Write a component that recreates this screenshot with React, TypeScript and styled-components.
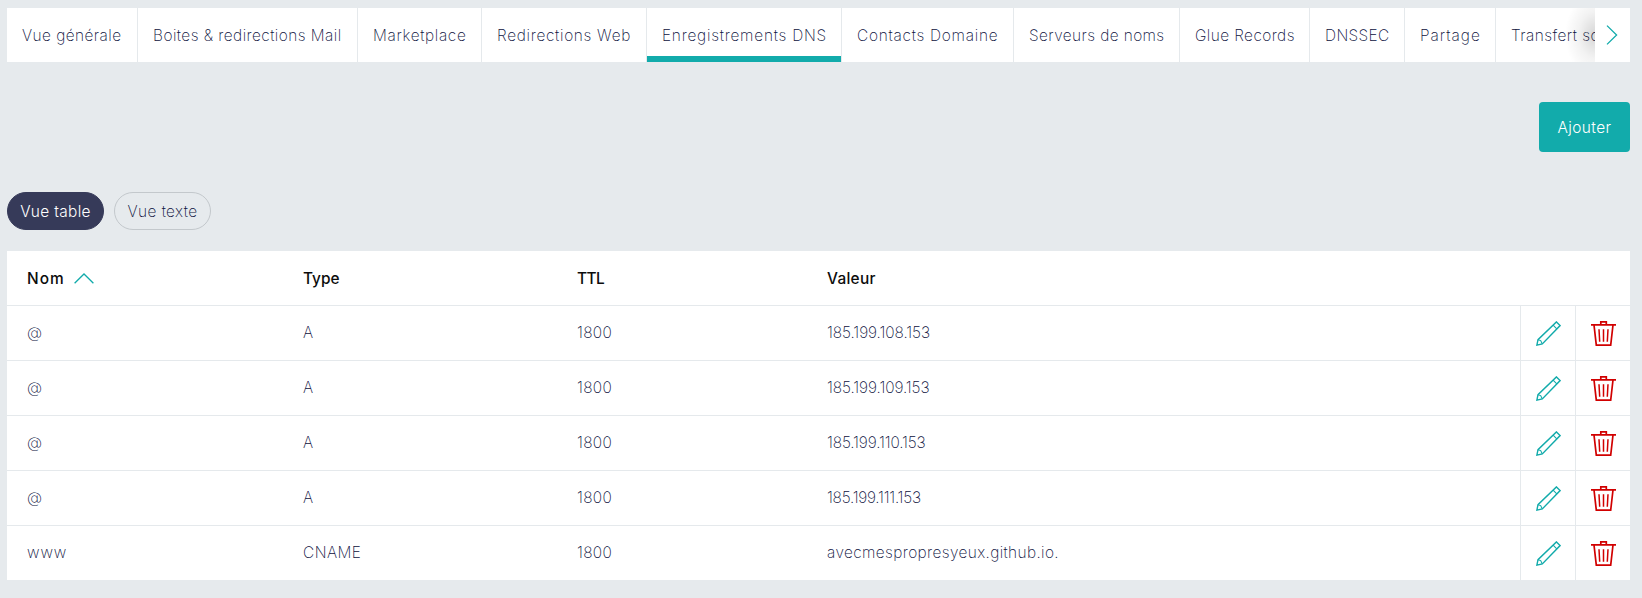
import React from "react";
import styled, { createGlobalStyle } from "styled-components";

const teal = "#12abab";
const ink = "#0b0f3c";
const line = "#e5e9ec";

const GlobalStyle = createGlobalStyle`
  * { box-sizing: border-box; }
  body {
    margin: 0;
    background: #e6eaed;
    color: ${ink};
    font-family: Inter, "Open Sans", sans-serif;
    font-size: 15.4px;
    font-weight: 200;
    line-height: 20px;
  }
`;

const Page = styled.main`
  height: 598px;
  padding: 8px 12px 0 7px;
  overflow: hidden;
`;

const TabBar = styled.nav`
  display: flex;
  height: 54px;
  background: #fff;
`;

const TabList = styled.div`
  position: relative;
  display: flex;
  flex: 1;
  min-width: 0;
  overflow: hidden;

  &::after {
    content: "";
    position: absolute;
    inset: 0 0 0 auto;
    width: 30px;
    background: radial-gradient(ellipse 30px 42px at 100% 50%, rgba(0, 0, 0, 0.16), rgba(0, 0, 0, 0.05) 55%, transparent);
  }
`;

const Tab = styled.a<{ $width: number; $active?: boolean }>`
  display: flex;
  align-items: center;
  flex: 0 0 ${(p) => p.$width}px;
  padding: 1px 0 0 15px;
  border-right: 1px solid ${line};
  white-space: nowrap;
  box-shadow: ${(p) => (p.$active ? `inset 0 -6px ${teal}` : "none")};
`;

const Label = styled.span<{ $tracking: number }>`
  letter-spacing: ${(p) => p.$tracking}px;
  white-space: nowrap;
`;

const ScrollButton = styled.button`
  display: flex;
  align-items: center;
  justify-content: center;
  width: 35px;
  padding: 0 1px 1px 0;
  border: 0;
  background: #fff;
`;

const Actions = styled.div`
  display: flex;
  justify-content: flex-end;
  padding-top: 40px;
`;

const AddButton = styled.button`
  width: 91px;
  height: 50px;
  padding: 0;
  border: 0;
  border-radius: 4px;
  background: ${teal};
  color: #fff;
  font: 350 15.4px Inter, sans-serif;
`;

const Views = styled.div`
  display: flex;
  gap: 10px;
  padding: 40px 0 21px;
`;

const Pill = styled.button<{ $selected?: boolean }>`
  width: 97px;
  height: 38px;
  padding: 1px 0 0;
  border: 1px solid ${(p) => (p.$selected ? "#363a59" : "#c3c8cc")};
  border-radius: 19px;
  background: ${(p) => (p.$selected ? "#363a59" : "transparent")};
  color: ${(p) => (p.$selected ? "#fff" : ink)};
  font: ${(p) => (p.$selected ? 350 : 200)} 15.4px Inter, sans-serif;
`;

const Table = styled.div`
  background: #fff;
`;

const Row = styled.div`
  display: grid;
  grid-template-columns: 276px 274px 250px 1fr 55px 55px;
  height: 55px;
  padding-left: 20px;

  & + & {
    border-top: 1px solid ${line};
  }
`;

const HeadRow = styled(Row)`
  height: 54px;
  color: #0c0c0c;
  font-weight: 500;
`;

const Cell = styled.div`
  display: flex;
  align-items: center;
  padding-bottom: 1px;
`;

const HeadCell = styled(Cell)`
  gap: 9px;
  padding: 2px 0 0;

  svg {
    margin-bottom: 2px;
  }
`;

const IconCell = styled.div`
  display: flex;
  align-items: center;
  justify-content: center;
  border-left: 1px solid ${line};
`;

const Pencil = () => (
  <svg width="25" height="25" viewBox="0 0 25 25" fill="none" stroke={teal} strokeWidth="1.4">
    <path d="M.9 24.1 2 18.7 20.4.9 24.1 4.6 6.3 22.9Z" />
    <path d="M17.1 4.2 20.8 7.9M2 18.7 4.7 19.6 6.3 22.9" strokeWidth="1.1" />
  </svg>
);

const Trash = () => (
  <svg width="25" height="25" viewBox="0 0 25 25" fill="none" stroke="#d10000" strokeWidth="1.7">
    <path d="M0 3.8H25M9.8 3.8V.9H15.3V3.8M3 4 5.3 24.1H19.7L22 4" />
    <path d="M8 8.3 8.7 20.8M12.5 8.3V20.8M17 8.3 16.3 20.8" strokeWidth="1.5" />
  </svg>
);

const tabs = [
  { text: "Vue générale", width: 131, tracking: 0.46 },
  { text: "Boites & redirections Mail", width: 220, tracking: 0.47 },
  { text: "Marketplace", width: 124, tracking: 0.68 },
  { text: "Redirections Web", width: 165, tracking: 0.71 },
  { text: "Enregistrements DNS", width: 195, tracking: 0.78, active: true },
  { text: "Contacts Domaine", width: 172, tracking: 0.75 },
  { text: "Serveurs de noms", width: 166, tracking: 0.42 },
  { text: "Glue Records", width: 130, tracking: 0.43 },
  { text: "DNSSEC", width: 95, tracking: 0.4 },
  { text: "Partage", width: 91, tracking: 1 },
  { text: "Transfert sortant", width: 150, tracking: 0.47 },
];

const records = [
  { name: "@", type: "A", value: "185.199.108.153", tracking: -0.05 },
  { name: "@", type: "A", value: "185.199.109.153", tracking: -0.06 },
  { name: "@", type: "A", value: "185.199.110.153", tracking: -0.12 },
  { name: "@", type: "A", value: "185.199.111.153", tracking: -0.23 },
  { name: "www", type: "CNAME", value: "avecmespropresyeux.github.io.", tracking: 0.4 },
];

export default function App() {
  return (
    <Page>
      <GlobalStyle />
      <TabBar>
        <TabList>
          {tabs.map((t) => (
            <Tab key={t.text} $width={t.width} $active={t.active}>
              <Label $tracking={t.tracking}>{t.text}</Label>
            </Tab>
          ))}
        </TabList>
        <ScrollButton aria-label="Suivant">
          <svg width="12" height="20" viewBox="0 0 12 20" fill="none" stroke={teal} strokeWidth="1.3">
            <path d="M1 .6 10.6 10 1 19.4" />
          </svg>
        </ScrollButton>
      </TabBar>
      <Actions>
        <AddButton>
          <Label $tracking={0.4}>Ajouter</Label>
        </AddButton>
      </Actions>
      <Views>
        <Pill $selected>
          <Label $tracking={0.35}>Vue table</Label>
        </Pill>
        <Pill>
          <Label $tracking={0.45}>Vue texte</Label>
        </Pill>
      </Views>
      <Table>
        <HeadRow>
          <HeadCell>
            <Label $tracking={1}>Nom</Label>
            <svg width="20" height="11" viewBox="0 0 20 11" fill="none" stroke={teal} strokeWidth="1.3">
              <path d="M.6 10.2 10 1 19.4 10.2" />
            </svg>
          </HeadCell>
          <HeadCell>
            <Label $tracking={0}>Type</Label>
          </HeadCell>
          <HeadCell>
            <Label $tracking={-0.6}>TTL</Label>
          </HeadCell>
          <HeadCell>
            <Label $tracking={0.3}>Valeur</Label>
          </HeadCell>
        </HeadRow>
        {records.map((r) => (
          <Row key={r.value}>
            <Cell>
              <Label $tracking={r.name === "www" ? 0.9 : 0}>{r.name}</Label>
            </Cell>
            <Cell>
              <Label $tracking={0.5}>{r.type}</Label>
            </Cell>
            <Cell>
              <Label $tracking={0.35}>1800</Label>
            </Cell>
            <Cell>
              <Label $tracking={r.tracking}>{r.value}</Label>
            </Cell>
            <IconCell>
              <Pencil />
            </IconCell>
            <IconCell>
              <Trash />
            </IconCell>
          </Row>
        ))}
      </Table>
    </Page>
  );
}
